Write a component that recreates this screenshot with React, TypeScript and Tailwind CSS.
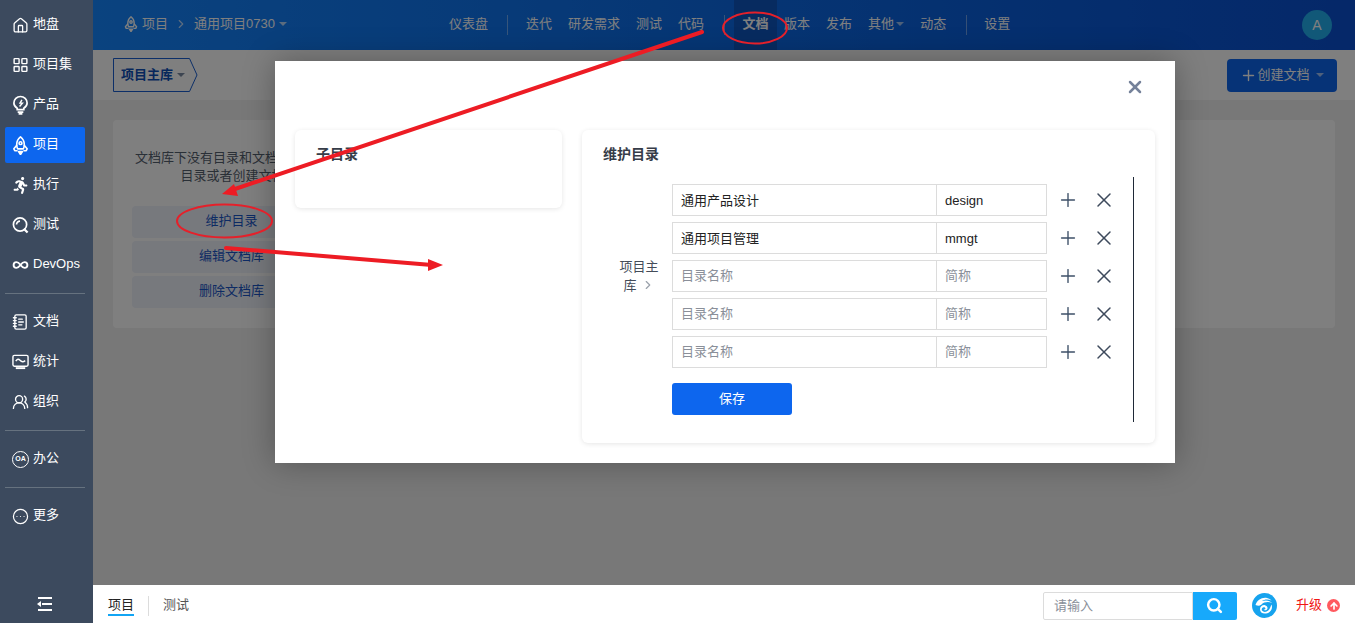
import { ArrowUp, ChevronRight, CircleEllipsis, House, LayoutGrid, NotebookText, Plus, Search, UsersRound, X } from 'lucide-react';
import { FaRunning } from 'react-icons/fa';
import type { ReactNode } from 'react';

const Caret = ({ className }: { className: string }) => (
  <span className={`inline-block border-x-[4px] border-t-[4px] border-x-transparent ${className}`} />
);

const RocketIcon = ({ size = 19 }: { size?: number }) => (
  <svg width={size} height={size} viewBox="0 0 18 20" fill="none" stroke="currentColor" strokeWidth="1.7" strokeLinejoin="round">
    <path d="M9 1c2.800 2.200 4 5 4 8 0 1.700-.4 3.200-1 4.500H6C5.400 12.200 5 10.700 5 9c0-3 1.200-5.800 4-8z" />
    <circle cx="9" cy="7.500" r="1.500" />
    <path d="M5.300 9.500 2 13.500l1 2h3M12.700 9.500l3.300 4-1 2h-3" />
    <path d="M7 16.500h4L9 19.500z" fill="currentColor" />
  </svg>
);

const BulbIcon = () => (
  <svg width="18" height="20" viewBox="0 0 18 20" fill="none" stroke="white" strokeWidth="1.8">
    <path d="M5.500 13.500C3.400 12.200 2 10.300 2 8a7 7 0 0 1 14 0c0 2.300-1.400 4.200-3.500 5.500v1.500h-7z" />
    <path d="M6 17.500h6M7 19.300h4" />
    <path d="M10.500 4.500 8.500 8h2.500L8 11.500" strokeWidth="1.500" />
  </svg>
);

const QIcon = () => (
  <svg width="18" height="18" viewBox="0 0 18 18" fill="none" stroke="white" strokeWidth="1.800">
    <circle cx="8.500" cy="8.500" r="7" />
    <path d="M4.800 8.500a3.700 3.700 0 0 1 3.700-3.700" />
    <path d="m12.500 13 4 4" strokeWidth="2.400" />
  </svg>
);

const LoopIcon = () => (
  <svg width="18" height="18" viewBox="0 0 18 18" fill="none" stroke="white" strokeWidth="2">
    <path d="M9 9c-1.500-2-2.700-3-4.300-3a3 3 0 0 0 0 6c1.600 0 2.800-1 4.300-3s2.700-3 4.300-3a3 3 0 0 1 0 6c-1.600 0-2.800-1-4.300-3z" />
  </svg>
);

const ScreenIcon = () => (
  <svg width="18" height="18" viewBox="0 0 18 18" fill="none" stroke="white" strokeWidth="1.500">
    <rect x="1" y="2" width="16" height="11.500" rx="1.500" />
    <path d="M4 8c1.500-2.500 3-2.500 4.500-.8S11.500 9.500 14 7.500" />
    <path d="M4 15.500h10" strokeWidth="2" />
  </svg>
);

const OaIcon = () => (
  <span className="flex h-[17px] w-[17px] shrink-0 items-center justify-center rounded-full border-[1.5px] border-white text-[7px] font-bold text-white">
    OA
  </span>
);

const CollapseIcon = () => (
  <svg width="16" height="14" viewBox="0 0 16 14" fill="white">
    <rect x="1" y="0" width="14" height="2" />
    <rect x="5" y="6" width="10" height="2" />
    <rect x="1" y="12" width="14" height="2" />
    <path d="M0 7l4-3v6z" />
  </svg>
);

const LogoIcon = () => (
  <svg width="25" height="25" viewBox="0 0 25 25" className="block">
    <circle cx="12.500" cy="12.500" r="12.500" fill="#16a3ee" />
    <path d="M3.500 12C5 7 10 4 15 5c2 .4 3.500 1.300 4.500 2.500-3-1.500-7-1.500-9.500.5 4-1.300 8-.5 10 1.800-3.500-1.300-8-1-10.500 1.700C7.500 13 6 13 3.500 12z" fill="white" />
    <path d="M19.500 11.500c1.500 3.500-.5 8-5.500 9-3.500.6-6-1.500-6-4.300 0-2.600 2.500-4.500 5-4 2 .4 3 2.200 2.300 3.800-.6 1.400-2.800 1.800-3.600.4 1 .4 1.800-.2 1.700-1-.1-1-1.300-1.500-2.400-1-1.300.6-1.700 2.200-.8 3.400 1.300 1.600 4.200 1.400 6-.2 1.500-1.400 2.300-3.600 3.300-6.100z" fill="white" />
  </svg>
);

const sideGroups: { label: string; icon: ReactNode; active?: boolean }[][] = [
  [
    { label: '地盘', icon: <House size={19} color="white" strokeWidth={1.800} /> },
    { label: '项目集', icon: <LayoutGrid size={18} color="white" strokeWidth={2} /> },
    { label: '产品', icon: <BulbIcon /> },
    { label: '项目', icon: <span className="text-white"><RocketIcon /></span>, active: true },
    { label: '执行', icon: <FaRunning size={17} color="white" /> },
    { label: '测试', icon: <QIcon /> },
    { label: 'DevOps', icon: <LoopIcon /> },
  ],
  [
    { label: '文档', icon: <NotebookText size={18} color="white" strokeWidth={1.900} /> },
    { label: '统计', icon: <ScreenIcon /> },
    { label: '组织', icon: <UsersRound size={18} color="white" strokeWidth={1.900} /> },
  ],
  [{ label: '办公', icon: <OaIcon /> }],
  [{ label: '更多', icon: <CircleEllipsis size={19} color="white" strokeWidth={1.700} /> }],
];

const rows = [
  { name: '通用产品设计', short: 'design' },
  { name: '通用项目管理', short: 'mmgt' },
  { name: '', short: '' },
  { name: '', short: '' },
  { name: '', short: '' },
];

function Sidebar() {
  return (
    <aside className="flex h-full w-[93px] shrink-0 flex-col bg-[#3c4a5e] pt-[7px] pr-[8px] pl-[5px] text-[13px] text-white">
      {sideGroups.map((group, i) => (
        <div key={i}>
          {i > 0 && <div className="my-[10px] h-px bg-[#66727f]" />}
          <div className="flex flex-col gap-1">
            {group.map((item) => (
              <div
                key={item.label}
                className={`flex h-9 items-center rounded-[2px] pl-[7px] ${item.active ? 'bg-[#0d66ee]' : ''}`}
              >
                <span className="flex w-[17px] justify-center">{item.icon}</span>
                <span className="ml-[4px] pb-[2px]">{item.label}</span>
              </div>
            ))}
          </div>
        </div>
      ))}
      <div className="mt-auto flex h-[38px] items-center justify-center">
        <CollapseIcon />
      </div>
    </aside>
  );
}

function TopBar() {
  const nav = ['迭代', '研发需求', '测试', '代码'];
  const nav2 = ['版本', '发布'];
  return (
    <header className="flex h-[50px] shrink-0 items-center bg-gradient-to-r from-[#1586ff] to-[#0a50d2] text-[13px] text-white">
      <div className="flex w-[356px] items-center pb-[2px] pl-[30px]">
        <RocketIcon size={16} />
        <span className="ml-[3px]">项目</span>
        <ChevronRight size={14} className="ml-[6px] opacity-70" />
        <span className="ml-[6px]">通用项目0730</span>
        <Caret className="ml-1 border-t-white/70" />
      </div>
      <span className="pb-[2px]">仪表盘</span>
      <span className="mr-[18px] ml-[19px] h-5 w-px bg-white/40" />
      <div className="flex gap-4 pb-[2px]">
        {nav.map((n) => (
          <span key={n}>{n}</span>
        ))}
      </div>
      <span className="ml-[20px] h-5 w-px bg-white/40" />
      <span className="ml-[9px] flex h-full w-[43px] items-center justify-center bg-[#0f56c0] pb-[2px] font-bold">文档</span>
      <div className="ml-[7px] flex gap-4 pb-[2px]">
        {nav2.map((n) => (
          <span key={n}>{n}</span>
        ))}
        <span className="flex items-center">
          其他
          <Caret className="ml-[2px] border-t-white/60" />
        </span>
      </div>
      <span className="ml-[16px] pb-[2px]">动态</span>
      <span className="mr-[17px] ml-[20px] h-5 w-px bg-white/40" />
      <span className="pb-[2px]">设置</span>
      <span className="mr-[23px] ml-auto flex h-[30px] w-[30px] items-center justify-center rounded-full bg-[#23b0f0] text-[14px]">
        A
      </span>
    </header>
  );
}

function PageBody() {
  return (
    <>
      <div className="flex h-[50px] shrink-0 items-center justify-between bg-white pr-[18px] pl-[20px]">
        <div className="relative flex h-[34px] w-[84px] items-center pl-2 text-[13px] font-bold text-[#0d4fb8]">
          <svg className="absolute inset-0" width="85" height="34" viewBox="0 0 85 34" fill="none" stroke="#1a5fd0">
            <path d="M.5.500h76l7.500 16.500-7.500 16.500H.5z" />
          </svg>
          项目主库
          <Caret className="ml-1 border-t-[#7b8ba3]" />
        </div>
        <button className="flex h-[33px] w-[110px] items-center justify-center rounded-[4px] bg-[#0d66ee] text-[13px] text-white">
          <Plus size={17} strokeWidth={2} />
          创建文档
          <Caret className="ml-[6px] border-t-white/60" />
        </button>
      </div>
      <div className="flex-1 bg-[#f0f0f0] px-[20px] pt-5">
        <div className="h-[208px] rounded-[4px] bg-white">
          <div className="w-[239px] pt-[29px] text-center text-[13px] leading-[18px] text-[#55606e]">
            <p>文档库下没有目录和文档，请维护</p>
            <p>目录或者创建文档</p>
            <div className="mt-[21px] ml-[19px] flex w-[199px] flex-col gap-[3px] text-[#1a56c8]">
              <div className="flex h-8 items-center justify-center rounded-[4px] bg-[#eef3fa] pb-[2px]">维护目录</div>
              <div className="flex h-8 items-center justify-center rounded-[4px] bg-[#eef3fa] pb-[2px]">编辑文档库</div>
              <div className="flex h-8 items-center justify-center rounded-[4px] bg-[#eef3fa] pb-[2px]">删除文档库</div>
            </div>
          </div>
        </div>
      </div>
    </>
  );
}

function Modal() {
  return (
    <div className="absolute top-[61px] left-[182px] h-[402px] w-[900px] bg-white px-5 shadow-[0_0_30px_rgba(0,0,0,0.3)]">
      <div className="flex h-[69px] justify-end pt-[16px] pr-[10px]">
        <X size={20} strokeWidth={3} className="text-[#75829a]" />
      </div>
      <div className="flex items-start gap-5 text-[#363c48]">
        <section className="h-[78px] w-[267px] rounded-[6px] bg-white px-[21px] pt-[14px] shadow-[0_1px_5px_rgba(0,0,0,0.1)]">
          <h2 className="text-[14px] leading-5 font-bold">子目录</h2>
        </section>
        <section className="h-[313px] w-[573px] rounded-[6px] bg-white px-[21px] pt-[14px] shadow-[0_1px_5px_rgba(0,0,0,0.1)]">
          <h2 className="text-[14px] leading-5 font-bold">维护目录</h2>
          <div className="mt-[13px] flex h-[245px] w-[531px] border-r border-[#1f2937] pt-[7px]">
            <div className="flex h-[184px] w-[69px] shrink-0 items-center pl-[16px]">
              <div className="w-[40px] text-center text-[13px] leading-[19px] text-[#444c59]">
                项目主库
                <ChevronRight size={14} className="ml-1 inline-block align-[-2px] text-[#9aa1ab]" />
              </div>
            </div>
            <div>
              <div className="flex flex-col gap-[6px]">
                {rows.map((row, i) => (
                  <div key={i} className="flex items-center">
                    <div className="flex h-8 w-[375px] border border-[#dcdcdc] text-[13px]">
                      <input
                        readOnly
                        defaultValue={row.name}
                        placeholder="目录名称"
                        className={`w-[263px] bg-transparent px-2 text-[#222] outline-none placeholder:text-[#8a8f99] ${row.name ? 'pt-[2px]' : ''}`}
                      />
                      <input
                        readOnly
                        defaultValue={row.short}
                        placeholder="简称"
                        className={`w-[110px] border-l border-[#dcdcdc] bg-transparent px-2 text-[#222] outline-none placeholder:text-[#8a8f99] ${row.short ? 'pt-[2px]' : ''}`}
                      />
                    </div>
                    <span className="flex w-[42px] justify-center text-[#3e5068]">
                      <Plus size={22} strokeWidth={1.500} />
                    </span>
                    <span className="flex w-[30px] justify-center text-[#3e4a5c]">
                      <X size={24} strokeWidth={1.500} />
                    </span>
                  </div>
                ))}
              </div>
              <button className="mt-[15px] h-8 w-[120px] rounded-[3px] bg-[#0d66ee] text-[13px] text-white">保存</button>
            </div>
          </div>
        </section>
      </div>
    </div>
  );
}

function BottomBar() {
  return (
    <footer className="flex h-[38px] shrink-0 items-center bg-white pt-[3px] pr-[15px] pl-[15px] text-[13px]">
      <span className="border-b-2 border-[#12a5f4] leading-[19px] text-[#222]">项目</span>
      <span className="mx-[14px] h-5 w-px bg-[#dcdcdc]" />
      <span className="pb-[2px] text-[#555]">测试</span>
      <div className="ml-auto flex h-[28px] items-center">
        <div className="flex h-full w-[150px] items-center rounded-l-[2px] border border-[#dcdcdc] pl-[10px] text-[#8a8f99]">
          请输入
        </div>
        <div className="flex h-full w-[44px] items-center justify-center rounded-r-[2px] bg-[#17a9fb]">
          <Search size={17} color="white" strokeWidth={3.500} />
        </div>
      </div>
      <span className="ml-[15px]">
        <LogoIcon />
      </span>
      <span className="ml-[19px] pb-[2px] text-[#f01414]">升级</span>
      <span className="ml-[5px] flex h-[13px] w-[13px] items-center justify-center rounded-full bg-[#ff5a5f]">
        <ArrowUp size={10} color="white" strokeWidth={4} />
      </span>
    </footer>
  );
}

function Annotations() {
  return (
    <svg className="pointer-events-none absolute top-0 left-0" width="1355" height="623" fill="none">
      <ellipse cx="755" cy="28" rx="32" ry="15.500" stroke="#e5202a" strokeWidth="2" />
      <ellipse cx="224.500" cy="221" rx="47.500" ry="16.500" stroke="#e5202a" strokeWidth="2" />
      <path d="M702 32 232 190" stroke="#ed1c24" strokeWidth="4" strokeLinecap="round" />
      <path d="M222 194 234 184 238 196z" fill="#ed1c24" />
      <path d="M226 248 432 265" stroke="#ed1c24" strokeWidth="4" strokeLinecap="round" />
      <path d="M443 265 428 259 428 271z" fill="#ed1c24" />
    </svg>
  );
}

export default function App() {
  return (
    <div className="relative flex h-screen w-screen overflow-hidden font-['Liberation_Sans','Noto_Sans_CJK_SC',sans-serif]">
      <Sidebar />
      <div className="flex min-w-0 flex-1 flex-col">
        <div className="relative flex min-h-0 flex-1 flex-col">
          <TopBar />
          <PageBody />
          {/* dimmed layer of the dialog */}
          <div className="absolute inset-0 bg-black/50" />
          <Modal />
        </div>
        <BottomBar />
      </div>
      <Annotations />
    </div>
  );
}
